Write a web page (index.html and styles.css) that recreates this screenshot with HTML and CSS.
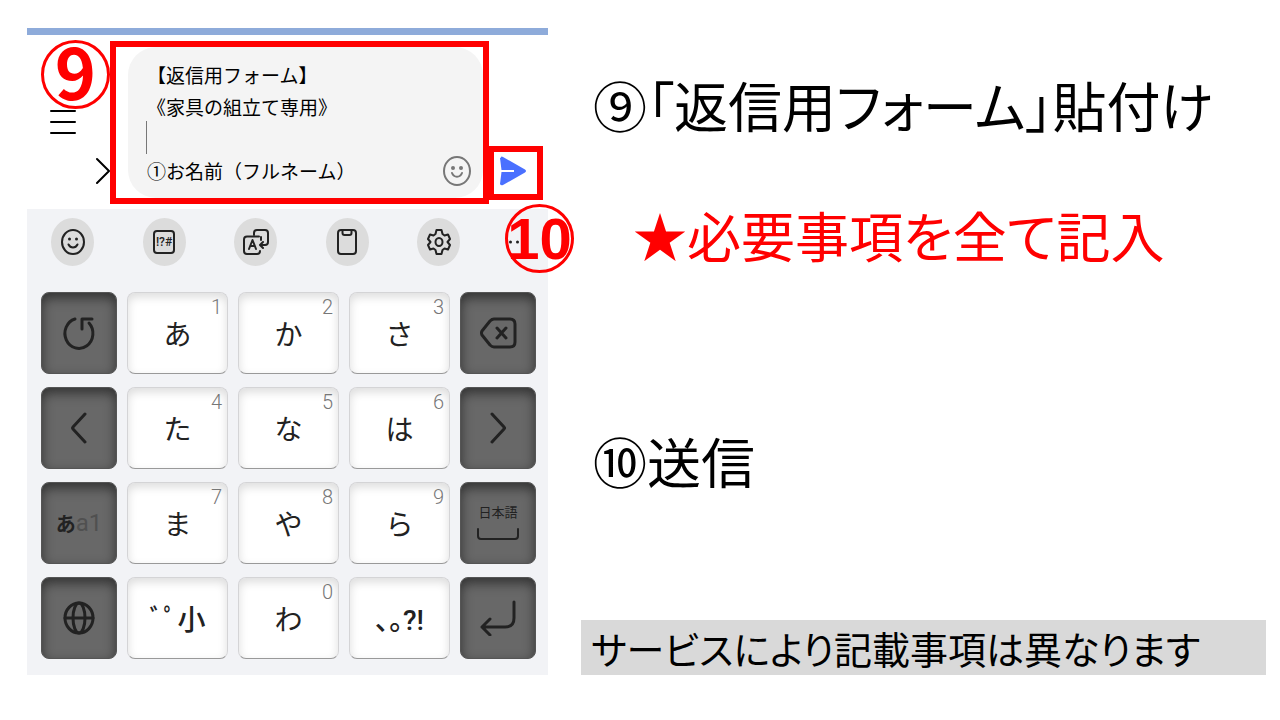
FILE: index.html
```html
<!DOCTYPE html>
<html lang="ja">

<head>
    <meta charset="UTF-8">
    <meta name="viewport" content="width=device-width, initial-scale=1.0">
    <title>返信用フォームの送り方</title>
    <link rel="stylesheet" href="styles.css">
</head>

<body>
    <main class="slide">
        <section class="phone">
            <div class="topbar"></div>

            <form class="compose">
                <div class="tools">
                    <button type="button" class="menu" aria-label="メニュー">
                        <svg width="26" height="26" viewBox="0 0 26 26"><path d="M1 2h24M1 13h24M1 24h24" /></svg>
                    </button>
                    <button type="button" class="expand" aria-label="開く">
                        <svg width="14" height="28" viewBox="0 0 14 28"><path d="M1 2l12 12L1 26" /></svg>
                    </button>
                </div>
                <div class="frame">
                    <div class="bubble">
                        <textarea rows="4" aria-label="メッセージ" spellcheck="false">【返信用フォーム】
《家具の組立て専用》

①お名前（フルネーム）</textarea>
                        <span class="caret"></span>
                        <button type="button" aria-label="絵文字">
                            <svg width="28" height="32" viewBox="0 0 28 32">
                                <ellipse cx="14" cy="16" rx="13" ry="14" />
                                <path d="M9 18c2 5 8 5 10 0" />
                                <path class="eyes" d="M10 13v0M18 13v0" />
                            </svg>
                        </button>
                    </div>
                </div>
                <button type="button" class="send" aria-label="送信">
                    <svg width="28" height="30" viewBox="0 0 28 30">
                        <path d="M2 1.500Q2 0 4 1L26 13.500Q28 15 26 16.500L4 29Q2 30 1 28L2.500 16H15V14H2.500L1 2Z" />
                    </svg>
                </button>
                <span class="badge nine">9</span>
            </form>

            <div class="keyboard">
                <div class="toolbar">
                    <button type="button" aria-label="顔文字">
                        <svg width="24" height="28" viewBox="0 0 24 28">
                            <ellipse cx="12" cy="14" rx="11" ry="12" />
                            <path d="M7.500 16.500c2 4 7 4 9 0" />
                            <path class="dot" d="M8.500 11v0M15.500 11v0" />
                        </svg>
                    </button>
                    <button type="button" aria-label="記号">
                        <svg width="24" height="28" viewBox="0 0 24 28">
                            <rect x="2" y="3" width="20" height="22" rx="3" />
                            <text x="12" y="18" text-anchor="middle">!?#</text>
                        </svg>
                    </button>
                    <button type="button" aria-label="翻訳">
                        <svg width="28" height="28" viewBox="0 0 28 28">
                            <path d="M12 7V5q0-3 3-3h8q3 0 3 3v9q0 3-3 3h-4M21 14l-3 3 3 3" />
                            <path d="M17 8.500H5q-3 0-3 3V23q0 3 3 3h10q3 0 3-3M19 9v3" />
                            <path d="M7 21l3.500-9 3.500 9M8.500 18h4" />
                        </svg>
                    </button>
                    <button type="button" aria-label="クリップボード">
                        <svg width="24" height="28" viewBox="0 0 24 28">
                            <rect x="3" y="2" width="18" height="24" rx="3" />
                            <path d="M7.500 2v3q0 2 2 2h5q2 0 2-2V2" />
                        </svg>
                    </button>
                    <button type="button" aria-label="設定">
                        <svg width="24" height="28" viewBox="0 0 24 28">
                            <path d="M9.500 2h5l1 4 2 1.500 3.500-1 2 4.500-2.500 3 2.500 3-2 4.500-3.500-1-2 1.500-1 4h-5l-1-4-2-1.500-3.500 1L1 17l2.500-3L1 11l2-4.500 3.500 1L8.500 6z" />
                            <ellipse cx="12" cy="14" rx="3.500" ry="4" />
                        </svg>
                    </button>
                    <button type="button" class="more" aria-label="その他">
                        <svg width="25" height="6" viewBox="0 0 25 6"><path class="dot" d="M1.500 3v0M8.500 3v0M15.500 3v0" /></svg>
                    </button>
                </div>

                <div class="keys">
                    <button type="button" class="dark" aria-label="戻す">
                        <svg width="36" height="40" viewBox="0 0 36 40"><path d="M14 6A14 15 0 1 0 28 10M21 16V6h10" /></svg>
                    </button>
                    <button type="button">あ<small>1</small></button>
                    <button type="button">か<small>2</small></button>
                    <button type="button">さ<small>3</small></button>
                    <button type="button" class="dark" aria-label="削除">
                        <svg width="38" height="32" viewBox="0 0 38 32"><path d="M15 2h16q5 0 5 5v18q0 5-5 5H15q-2 0-4-2L3 18q-1-2 0-4l8-10q2-2 4-2zM18 11l9 10M27 11l-9 10" /></svg>
                    </button>

                    <button type="button" class="dark" aria-label="左へ">
                        <svg width="18" height="32" viewBox="0 0 18 32"><path d="M15 2L3 15q-1 1 0 2l12 13" /></svg>
                    </button>
                    <button type="button">た<small>4</small></button>
                    <button type="button">な<small>5</small></button>
                    <button type="button">は<small>6</small></button>
                    <button type="button" class="dark" aria-label="右へ">
                        <svg width="18" height="32" viewBox="0 0 18 32"><path d="M3 2l12 13q1 1 0 2L3 30" /></svg>
                    </button>

                    <button type="button" class="dark mode"><b>あ</b><span>a1</span></button>
                    <button type="button">ま<small>7</small></button>
                    <button type="button">や<small>8</small></button>
                    <button type="button">ら<small>9</small></button>
                    <button type="button" class="dark space">日本語
                        <svg width="44" height="14" viewBox="0 0 44 14"><path d="M2 2v7q0 3 3 3h34q3 0 3-3V2" /></svg>
                    </button>

                    <button type="button" class="dark" aria-label="言語">
                        <svg width="32" height="34" viewBox="0 0 32 34">
                            <ellipse cx="16" cy="17" rx="14" ry="15" />
                            <ellipse cx="16" cy="17" rx="6" ry="15" />
                            <path d="M2 17h28" />
                        </svg>
                    </button>
                    <button type="button" class="marks">ﾞﾟ小</button>
                    <button type="button">わ<small>0</small></button>
                    <button type="button" class="marks">、。?!</button>
                    <button type="button" class="dark" aria-label="改行">
                        <svg width="38" height="36" viewBox="0 0 38 36"><path d="M35 2v16q0 9-9 9H3M11 19l-8 8 8 8" /></svg>
                    </button>
                </div>
                <span class="badge ten">10</span>
            </div>
        </section>

        <section class="guide">
            <h1>⑨「返信用フォーム」貼付け</h1>
            <p class="must">★必要事項を全て記入</p>
            <h2>⑩送信</h2>
            <p class="note">サービスにより記載事項は異なります</p>
        </section>
    </main>
</body>

</html>
```
FILE: styles.css
```css
* {
    margin: 0;
    padding: 0;
    box-sizing: border-box;
}

body {
    background-color: white;
    color: black;
    font-family: "Noto Sans CJK JP", sans-serif;
}

button {
    border: none;
    background: none;
    color: inherit;
    font-family: inherit;
    display: flex;
    justify-content: center;
    align-items: center;
}

svg {
    fill: none;
    stroke: #222;
    stroke-width: 2;
    stroke-linecap: round;
    stroke-linejoin: round;
}

.slide {
    padding: 28px 14px 28px 27px;
    display: grid;
    grid-template-columns: minmax(0, 521fr) minmax(0, 685fr);
    gap: 33px;
}

/* 入力欄 */
.topbar {
    height: 7px;
    background-color: #8eabda;
}

.compose {
    position: relative;
    padding: 6px 5px 5px 0;
    display: flex;
}

.tools {
    width: 83px;
    padding: 68px 0 19px;
    display: flex;
    flex-direction: column;
    justify-content: space-between;
}

.tools svg {
    stroke: black;
}

.menu {
    align-self: flex-start;
    margin-left: 23px;
}

.expand {
    align-self: flex-end;
}

.frame {
    flex: 1;
    border: 6px solid red;
    padding-left: 12px;
}

.bubble {
    position: relative;
    border-radius: 28px;
    background-color: #f4f4f4;
    padding: 12px 12px 11px 19px;
    display: flex;
    align-items: flex-end;
}

.bubble textarea {
    flex: 1;
    min-width: 0;
    height: 128px;
    border: none;
    outline: none;
    resize: none;
    overflow: hidden;
    background: none;
    font-family: inherit;
    font-size: 19px;
    line-height: 32px;
}

.bubble svg {
    stroke: #777;
}

.bubble .eyes {
    stroke-width: 4;
}

.caret {
    position: absolute;
    left: 18px;
    top: 74px;
    width: 1px;
    height: 33px;
    background-color: #777;
}

.send {
    align-self: flex-end;
    width: 54px;
    height: 54px;
    margin-bottom: 4px;
    padding: 0 6px 4px 0;
    border: 6px solid red;
    border-left-width: 5px;
}

.send svg {
    fill: #4a70ff;
    stroke: none;
}

.badge {
    position: absolute;
    width: 69px;
    height: 69px;
    border: 3px solid red;
    border-radius: 50%;
    color: red;
    font-weight: bold;
    display: flex;
    justify-content: center;
    align-items: center;
}

.nine {
    left: 14px;
    top: 5px;
    padding-bottom: 10px;
    font-size: 70px;
}

.ten {
    right: -26px;
    top: -5px;
    font-family: "Liberation Sans", sans-serif;
    font-size: 58px;
}

/* キーボード */
.keyboard {
    position: relative;
    background-color: #f2f3f6;
    padding: 9px 12px 16px 14px;
}

.toolbar {
    padding: 0 2px 0 10px;
    margin-bottom: 26px;
    display: flex;
    justify-content: space-between;
}

.toolbar button {
    width: 43px;
    height: 48px;
    border-radius: 50%;
    background-color: #dcdcdc;
}

.toolbar .more {
    width: 25px;
    background: none;
}

.toolbar .dot {
    stroke-width: 3;
}

.toolbar text {
    fill: #222;
    stroke: none;
    font-family: Roboto, sans-serif;
    font-size: 12px;
    font-weight: 500;
}

.keys {
    display: grid;
    grid-template-columns: 76fr 101fr 101fr 101fr 76fr;
    grid-auto-rows: 82px;
    gap: 13px 10px;
}

.keys button {
    position: relative;
    border: 1px solid #d4d4d6;
    border-bottom-color: #999;
    border-radius: 8px;
    background-color: white;
    box-shadow: inset 0 4px 10px #ddd;
    color: #222;
    font-size: 28px;
}

.keys small {
    position: absolute;
    right: 5px;
    top: 2px;
    color: #777;
    font-family: Roboto, sans-serif;
    font-size: 20px;
    font-weight: 300;
}

.keys .dark {
    border-color: #555;
    background-color: #686868;
    box-shadow: inset 0 5px 12px #333;
}

.keys svg {
    stroke-width: 3;
}

.keys .mode {
    font-size: 20px;
}

.mode span {
    color: #505050;
    font-family: Roboto, sans-serif;
    font-size: 24px;
}

.keys .space {
    padding-bottom: 4px;
    flex-direction: column;
    gap: 6px;
    font-size: 13px;
}

.keys .space svg {
    stroke-width: 2;
}

.keys .marks {
    font-family: Roboto, "Noto Sans CJK JP", sans-serif;
    font-feature-settings: "palt";
    font-weight: 500;
}

/* 説明 */
.guide {
    padding-top: 45px;
    display: flex;
    flex-direction: column;
    font-feature-settings: "palt";
}

.guide h1,
.guide h2,
.must {
    padding-left: 12px;
    font-size: 54px;
    font-weight: 400;
    line-height: 64px;
    white-space: nowrap;
}

.guide .must {
    margin: 66px 0 162px;
    padding-left: 52px;
    color: red;
}

.note {
    margin-top: auto;
    padding-left: 10px;
    background-color: #d9d9d9;
    font-size: 38px;
    line-height: 55px;
    white-space: nowrap;
}
```
